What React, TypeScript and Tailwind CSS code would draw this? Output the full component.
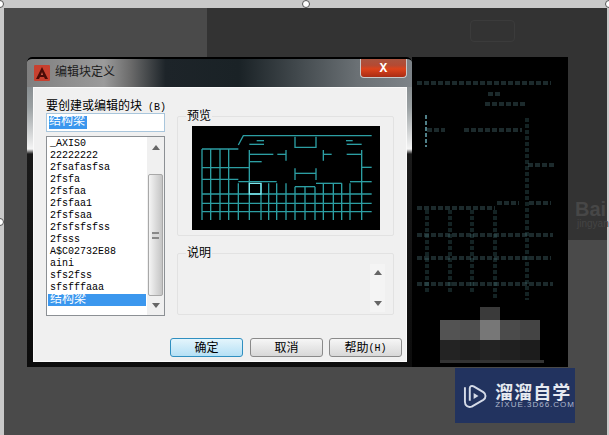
import React from 'react';

const uiFont = { fontFamily: '"Liberation Mono", "Noto Sans CJK SC", monospace' };

const blockNames = [
  '_AXIS0',
  '22222222',
  '2fsafasfsa',
  '2fsfa',
  '2fsfaa',
  '2fsfaa1',
  '2fsfsaa',
  '2fsfsfsfss',
  '2fsss',
  'A$C02732E88',
  'aini',
  'sfs2fss',
  'sfsfffaaa',
];

// preview drawing, coordinates are page px * 3
const previewLines = [
  'M145 75L160 47H545',
  'M36 87H145', 'M36 143H178', 'M36 178H145', 'M36 222H545', 'M36 250H545', 'M36 275H545',
  'M36 87V300', 'M62 87V300', 'M90 87V300', 'M116 87V300',
  'M145 190V300', 'M178 90V300', 'M213 190V300', 'M236 190V300', 'M260 190V300', 'M288 190V300',
  'M315 200V300', 'M345 200V300', 'M375 200V300', 'M400 190V300', 'M430 190V300', 'M455 190V300',
  'M480 190V300', 'M515 90V300',
  'M145 185H260', 'M378 190H455', 'M480 185H545', 'M315 200H375',
  'M315 50V82H378V50', 'M315 145V180', 'M378 145V180', 'M315 160H378',
  'M178 103H250', 'M288 90V122', 'M262 103H288', 'M400 90V122', 'M400 103H425', 'M470 103H515',
  'M178 125H215', 'M515 142H545', 'M178 73H222', 'M470 73H515',
  'M200 62H222', 'M468 62H488',
];

// plan on the black canvas, page coordinates
const dashH: [number, number, number][] = [
  [417, 551, 83], [488, 502, 94], [485, 527, 104], [427, 445, 130], [464, 522, 130],
  [528, 555, 165], [497, 519, 203], [529, 551, 203], [417, 495, 208],
  [417, 553, 235], [417, 551, 258], [417, 553, 284],
];
const dashV: [number, number, number][] = [
  [527, 118, 300], [427, 210, 293], [450, 210, 293], [472, 210, 293], [495, 210, 300],
];

const mosaicTop = ['#535353', '#4f4f4f', '#777777', '#4b4b4b', '#444444'];
const mosaicBottom = ['#232323', '#1f1f1f', '#232323', '#202020', '#1c1c1c'];

function Handle({ className }: { className: string }) {
  return <div className={`absolute h-2 w-2 rounded-full border border-[#555] bg-white ${className}`} />;
}

function PlanDrawing() {
  return (
    <svg className="absolute left-0 top-0" width="156" height="310" viewBox="412 57 156 310">
      {dashH.map(([a, b, y], i) => (
        <g key={i} stroke="#5f8e96" strokeWidth="0.6" strokeDasharray="5 2" fill="none">
          <path d={`M${a} ${y - 1}H${b}`} />
          <path d={`M${a} ${y + 1}H${b}`} />
        </g>
      ))}
      {dashV.map(([x, a, b], i) => (
        <g key={i} stroke="#44757a" strokeWidth="0.6" strokeDasharray="4 2" fill="none">
          <path d={`M${x - 1} ${a}V${b}`} />
          <path d={`M${x + 1} ${a}V${b}`} />
        </g>
      ))}
      <path d="M426 115V147" stroke="#4f7f88" strokeWidth="2" strokeDasharray="4 2" fill="none" />
    </svg>
  );
}

function Mosaic() {
  return (
    <div className="absolute left-[28px] top-[250px] flex w-[104px] flex-col">
      <div className="ml-[40px] h-[13px] w-5 bg-[#3a3a3a]" />
      <div className="flex">
        {mosaicTop.map((c, i) => (
          <div key={i} className="h-5 w-5" style={{ background: c }} />
        ))}
      </div>
      <div className="flex">
        {mosaicBottom.map((c, i) => (
          <div key={i} className="h-5 w-5" style={{ background: c }} />
        ))}
      </div>
      <div className="h-[3px] bg-[#333]" />
    </div>
  );
}

function AcadIcon() {
  return (
    <svg width="16" height="16" viewBox="0 0 16 16">
      <rect width="16" height="16" rx="1" fill="#c8402f" />
      <path d="M8 2L14 14H11L10 12H6L5 14H2Z" fill="#4a0c08" />
      <path d="M8 7L9 10H7Z" fill="#d8604a" />
    </svg>
  );
}

function Arrow({ up }: { up?: boolean }) {
  return (
    <svg width="8" height="5" viewBox="0 0 8 5">
      <path d={up ? 'M4 0L8 5H0Z' : 'M0 0H8L4 5Z'} fill="#666" />
    </svg>
  );
}

function PushButton({ label, primary, className }: { label: React.ReactNode; primary?: boolean; className?: string }) {
  return (
    <button
      className={`flex h-[19px] w-[73px] items-center justify-center rounded-[3px] border pt-[2px] text-[12px] text-black ${
        primary
          ? 'border-[#2f8fc0] bg-[linear-gradient(#e4f5fc,#b5e0f5)]'
          : 'border-[#8a8a8a] bg-[linear-gradient(#f6f6f6,#d8d8d8)]'
      } ${className ?? ''}`}
    >
      {label}
    </button>
  );
}

function GroupBox({ title, className, children }: { title: string; className: string; children?: React.ReactNode }) {
  return (
    <div className={`relative rounded-[2px] border border-[#e2e2e2] ${className}`}>
      <span className="absolute left-2 top-[-7px] bg-[#f0f0f0] px-px text-[12px] leading-[14px] text-black">{title}</span>
      {children}
    </div>
  );
}

function BlockPanel() {
  return (
    <div className="w-[119px]">
      <div className="h-[14px] whitespace-nowrap text-[12px] leading-[17px] text-black">
        要创建或编辑的块<span className="text-[10px]"> (B)</span>
      </div>
      <div className="h-[19px] border border-[#a9c6dc] bg-white pl-[2px] pt-[2px]">
        <span className="block h-[13px] w-[38px] bg-[#3b97ee] text-[12px] leading-[13px] text-white">结构梁</span>
      </div>
      <div className="mt-1 flex h-[180px] border border-[#8c9094] bg-white">
        <div className="flex-1 px-px pt-[1px]">
          {blockNames.map(name => (
            <div key={name} className="h-3 pl-[2px] text-[10px] leading-3 text-black">
              {name}
            </div>
          ))}
          <div className="h-3 bg-[#3b97ee] pl-[2px] text-[12px] leading-3 text-white">结构梁</div>
        </div>
        <div className="flex w-[17px] flex-col items-center bg-[#f0f0f0]">
          <div className="mt-[8px]">
            <Arrow up />
          </div>
          <div className="mt-[24px] flex h-[122px] w-[15px] items-center justify-center rounded-[2px] border border-[#a8a8a8] bg-[linear-gradient(to_right,#f4f4f4,#c4c4c4)]">
            <div className="h-[7px] w-[7px] border-y-2 border-[#888] bg-[#d8d8d8]" />
          </div>
          <div className="mt-[7px]">
            <Arrow />
          </div>
        </div>
      </div>
    </div>
  );
}

function InfoPanel() {
  return (
    <div className="ml-3 mt-[17px] w-[217px]">
      <GroupBox title="预览" className="h-[120px] pl-[14px] pt-[9px]">
        <div className="h-[104px] w-[188px] bg-black">
          <svg width="188" height="104" viewBox="6 18 564 312">
            {previewLines.map((d, i) => (
              <path key={i} d={d} stroke="#2c9ea3" strokeWidth="4" fill="none" />
            ))}
            <path d="M178 190H213V222H178Z" stroke="#7fe8ee" strokeWidth="4" fill="none" />
          </svg>
        </div>
      </GroupBox>
      <GroupBox title="说明" className="mt-[17px] flex h-[62px] justify-end pr-[8px]">
        <div className="mt-[10px] flex h-[48px] w-[15px] flex-col items-center justify-between bg-[#f4f4f4] py-[6px]">
          <Arrow up />
          <Arrow />
        </div>
      </GroupBox>
    </div>
  );
}

function Dialog() {
  return (
    <div
      className="absolute left-[23px] top-[49px] w-[385px] rounded-t-[5px] bg-[linear-gradient(#6e7478_0px,#9aa0a2_50px,#f5f5f5_92px,#1a1a1a_97px,#0c0c0c_100%)] pb-[5px] pl-[6px] pr-[5px]"
      style={uiFont}
    >
      <div className="-ml-[6px] -mr-[5px] flex h-[30px] items-start justify-between rounded-t-[5px] border-t-2 border-black bg-[linear-gradient(to_right,#7f7f7f,#9b9b9b_20%,#6a6a6a_27%,#1d2429_36%,#1a2226_55%,#6b7175_86%,#7d8388)] pl-[7px]">
        <div className="flex items-center gap-[5px] pt-[6px]">
          <AcadIcon />
          <span className="text-[12px] leading-4 text-[#1c1c1c]">编辑块定义</span>
        </div>
        <div className="mr-[5px] flex h-[19px] w-[47px] items-center justify-center rounded-b-[4px] border border-t-0 border-[#c9c9c9] bg-[linear-gradient(#a9543f,#b44a33_35%,#dd431b_55%,#a82c14)]">
          <span className="text-[13px] font-bold leading-none text-white">X</span>
        </div>
      </div>
      <div className="h-[275px] border border-[#fafafa] bg-[#f0f0f0] pl-3 pt-[11px]">
        <div className="flex">
          <BlockPanel />
          <InfoPanel />
        </div>
        <div className="ml-[124px] mt-[22px] flex">
          <PushButton primary label="确定" />
          <PushButton label="取消" className="ml-[7px]" />
          <PushButton
            className="ml-[6px]"
            label={
              <>
                帮助<span className="text-[10px]">(H)</span>
              </>
            }
          />
        </div>
      </div>
    </div>
  );
}

function Watermark() {
  return (
    <div className="absolute left-[451px] top-[360px] flex h-[55px] w-[120px] items-center gap-2 bg-[#22335f] pl-2">
      <svg width="25" height="26" viewBox="0 0 25 26" fill="none" stroke="#d5dbe8" strokeWidth="2">
        <path d="M2 4V19C2 23 5 25 9 24L21 17C24 15 24 11 21 9L11 3C9 2 7 3 7 5V18" strokeLinejoin="round" />
        <path d="M11 10L16 13L11 16Z" fill="#d5dbe8" stroke="none" />
      </svg>
      <div className="flex flex-col">
        <span
          className="h-[18px] text-[18px] font-bold leading-[18px] tracking-[1px] text-[#e6e9f0]"
          style={{ fontFamily: '"Noto Sans CJK SC", sans-serif' }}
        >
          溜溜自学
        </span>
        <span
          className="h-[10px] text-[8px] leading-[10px] tracking-[1px] text-[#aeb7cc]"
          style={{ fontFamily: '"Liberation Sans", sans-serif' }}
        >
          ZIXUE.3D66.COM
        </span>
      </div>
    </div>
  );
}

export default function App() {
  return (
    <div className="relative h-[435px] w-[609px] overflow-hidden bg-[#c9c9c9]">
      <div className="relative ml-1 mr-[2px] mt-2 h-[427px] bg-[#4a4a4a]">
        {/* darker window behind the dialog */}
        <div className="absolute left-[203px] top-0 h-[232px] w-[400px] bg-[#333333]">
          <div className="absolute left-[263px] top-[12px] h-[22px] w-[45px] rounded-[4px] border border-[#3b3b3b]" />
          <div className="absolute left-[368px] top-[192px] text-[20px] font-bold leading-[18px] text-[#474747]" style={{ fontFamily: '"Liberation Sans", sans-serif' }}>
            Bai
          </div>
          <div className="absolute left-[370px] top-[210px] text-[10px] leading-3 text-[#444]" style={{ fontFamily: '"Liberation Sans", sans-serif' }}>
            jingyan
          </div>
        </div>
        <div className="absolute left-[408px] top-[49px] h-[310px] w-[156px] bg-black">
          <PlanDrawing />
          <Mosaic />
        </div>
        <Dialog />
        <Watermark />
      </div>
      <Handle className="left-[302px] top-0" />
      <Handle className="-left-1 top-0" />
      <Handle className="-right-1 top-0" />
      <Handle className="-left-1 top-[218px]" />
    </div>
  );
}
